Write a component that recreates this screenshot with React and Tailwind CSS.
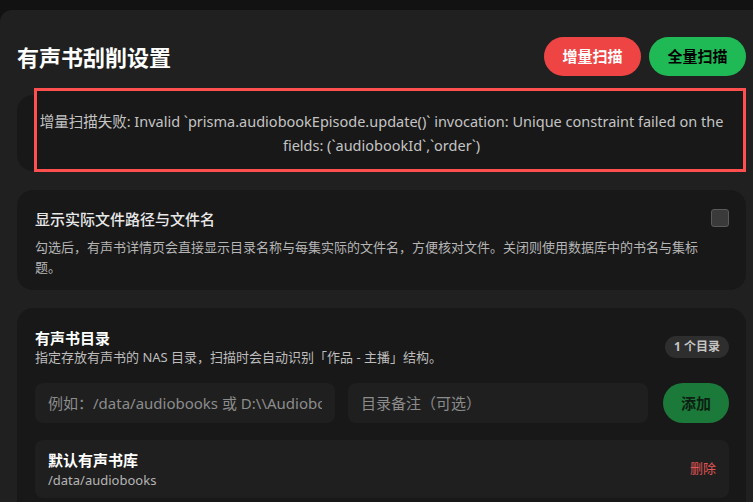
export default function App() {
  return (
    <div
      className="min-h-[502px] bg-[#121212] pt-[10px] overflow-hidden"
      style={{ fontFamily: '"Noto Sans", "Noto Sans CJK SC", sans-serif' }}
    >
      <div className="rounded-tl-xl bg-[#202020] pl-[17px] pr-[7px] pt-[27px] pb-6 min-h-[492px]">
        {/* header */}
        <div className="flex items-center justify-between">
          <h1 className="text-[22px] font-bold leading-none text-white">有声书刮削设置</h1>
          <div className="flex gap-2">
            <button className="h-[39px] w-[97px] rounded-full bg-[#ef4444] text-[15px] font-bold text-white">
              增量扫描
            </button>
            <button className="h-[39px] w-[97px] rounded-full bg-[#1fba55] text-[15px] font-bold text-black">
              全量扫描
            </button>
          </div>
        </div>

        {/* error */}
        <div className="relative mt-[19px] rounded-2xl bg-[#181818] px-5 py-[14px]">
          <div className="absolute -top-[7px] -bottom-px left-[17px] right-0 border-[3px] border-[#ff4f4f] bg-[#181818]" />
          <p className="relative text-center text-[14.5px] leading-6 text-[#c4c4c4]">
            增量扫描失败: Invalid `prisma.audiobookEpisode.update()` invocation: Unique constraint failed on the
            fields: (`audiobookId`,`order`)
          </p>
        </div>

        {/* toggle card */}
        <div className="mt-[19px] flex items-start gap-3 rounded-2xl bg-[#181818] pl-[18px] pr-[17px] pt-[18px] pb-[13px]">
          <div className="min-w-0 flex-1">
            <div className="text-[15px] font-medium leading-[22px] text-[#e8e8e8]">显示实际文件路径与文件名</div>
            <p className="mt-[7px] text-[13px] leading-5 text-[#b5b5b5]">
              勾选后，有声书详情页会直接显示目录名称与每集实际的文件名，方便核对文件。关闭则使用数据库中的书名与集标题。
            </p>
          </div>
          <div className="mt-[1px] h-[18px] w-[18px] shrink-0 rounded-[3px] border border-[#5a5a5a] bg-[#3a3a3a]" />
        </div>

        {/* directories */}
        <div className="mt-[18px] rounded-t-2xl bg-[#181818] pl-[18px] pr-[17px] pt-5 pb-4">
          <div className="flex items-center justify-between">
            <div>
              <div className="text-[15px] font-bold leading-5 text-white">有声书目录</div>
              <div className="text-[13px] leading-[18px] text-[#bdbdbd]">
                指定存放有声书的 NAS 目录，扫描时会自动识别「作品 - 主播」结构。
              </div>
            </div>
            <span className="flex h-[22px] w-16 items-center justify-center rounded-full bg-[#2e2e2e] text-[12px] font-bold text-[#c4c4c4]">
              1 个目录
            </span>
          </div>

          <div className="mt-[17px] flex items-center gap-[13px]">
            <input
              className="h-10 min-w-0 flex-1 rounded-lg bg-[#1f1f1f] px-[13px] text-[15px] text-white outline-none placeholder:text-[#8c8c8c]"
              placeholder="例如：/data/audiobooks 或 D:\\Audiobooks"
            />
            <input
              className="h-10 min-w-0 flex-1 rounded-lg bg-[#1f1f1f] px-[13px] text-[15px] text-white outline-none placeholder:text-[#8c8c8c]"
              placeholder="目录备注（可选）"
            />
            <button className="ml-[2px] h-10 w-[66px] shrink-0 rounded-full bg-[#1b7a3a] text-[15px] font-bold text-[#0b1f12]">
              添加
            </button>
          </div>

          <div className="mt-[17px] flex items-center justify-between rounded-lg bg-[#1f1f1f] px-[13px] py-[9px]">
            <div>
              <div className="text-[15px] font-bold leading-[22px] text-white">默认有声书库</div>
              <div className="text-[13px] leading-[18px] text-[#b5b5b5]">/data/audiobooks</div>
            </div>
            <span className="text-[13px] text-[#e05555]">删除</span>
          </div>
        </div>
      </div>
    </div>
  );
}
